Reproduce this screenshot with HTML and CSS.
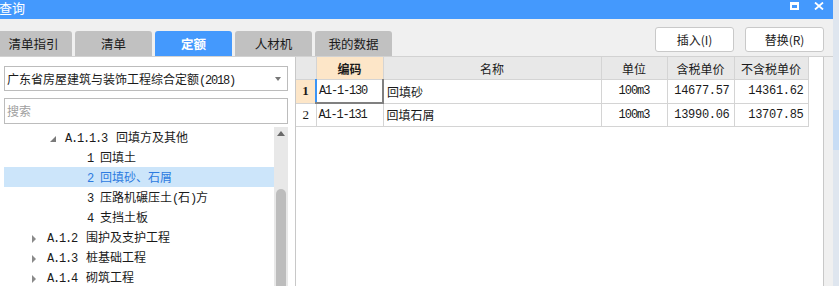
FILE: index.html
```html
<!DOCTYPE html>
<html lang="zh-CN">
<head>
  <meta charset="UTF-8">
  <title>查询</title>
  <link rel="stylesheet" href="styles.css">
</head>
<body>
  <div class="window">
    <!-- Title bar -->
    <div class="titlebar">
      <span class="title">查询</span>
      <div class="title-icons">
        <span class="icon-restore"></span>
        <svg class="icon-close" width="10" height="8" viewBox="0 0 10 8">
          <path d="M1 0.5 L9 7.5 M9 0.5 L1 7.5" stroke="#fff" stroke-width="1.8"/>
        </svg>
      </div>
    </div>

    <!-- Tabs and buttons -->
    <div class="toolbar">
      <div class="tabs">
        <div class="tab">清单指引</div>
        <div class="tab">清单</div>
        <div class="tab active">定额</div>
        <div class="tab">人材机</div>
        <div class="tab">我的数据</div>
      </div>
      <div class="actions">
        <button class="btn">插入(I)</button>
        <button class="btn">替换(R)</button>
      </div>
    </div>

    <div class="main">
      <!-- Left panel -->
      <div class="left">
        <div class="select">
          <span>广东省房屋建筑与装饰工程综合定额<span class="mono">(2018)</span></span>
          <span class="select-arrow"></span>
        </div>
        <div class="search">搜索</div>
        <div class="tree-wrap">
          <div class="tree">
            <div class="node lvl3"><span class="tri-open"></span><span class="code">A.1.1.3</span>回填方及其他</div>
            <div class="node leaf"><span class="num">1</span>回填土</div>
            <div class="node leaf selected"><span class="num">2</span>回填砂、石屑</div>
            <div class="node leaf"><span class="num">3</span>压路机碾压土<span class="mono">(</span>石<span class="mono">)</span>方</div>
            <div class="node leaf"><span class="num">4</span>支挡土板</div>
            <div class="node lvl2"><span class="tri-closed"></span><span class="code">A.1.2</span>围护及支护工程</div>
            <div class="node lvl2"><span class="tri-closed"></span><span class="code">A.1.3</span>桩基础工程</div>
            <div class="node lvl2"><span class="tri-closed"></span><span class="code">A.1.4</span>砌筑工程</div>
          </div>
          <div class="scrollbar">
            <span class="scroll-up"></span>
            <span class="scroll-thumb"></span>
          </div>
        </div>
      </div>

      <!-- Right panel -->
      <div class="right">
        <table class="grid">
          <colgroup>
            <col style="width:20px"><col style="width:67px"><col style="width:218px">
            <col style="width:66px"><col style="width:67px"><col style="width:74px">
          </colgroup>
          <thead>
            <tr>
              <th></th>
              <th class="hl">编码</th>
              <th>名称</th>
              <th>单位</th>
              <th>含税单价</th>
              <th>不含税单价</th>
            </tr>
          </thead>
          <tbody>
            <tr>
              <td class="rownum hl">1</td>
              <td class="code-cell current">A1-1-130</td>
              <td>回填砂</td>
              <td class="unit">100m3</td>
              <td class="price">14677.57</td>
              <td class="price">14361.62</td>
            </tr>
            <tr>
              <td class="rownum">2</td>
              <td class="code-cell">A1-1-131</td>
              <td>回填石屑</td>
              <td class="unit">100m3</td>
              <td class="price">13990.06</td>
              <td class="price">13707.85</td>
            </tr>
          </tbody>
        </table>
      </div>
    </div>
  </div>

  <div class="desk">
    <div class="desk-sel"></div>
  </div>
</body>
</html>
```

FILE: styles.css
```css
/* General */
body {
  margin: 0;
  height: 286px;
  overflow: hidden;
  display: flex;
  background-color: #dfe6ef;
  font-family: "Noto Sans CJK SC", "Noto Sans", sans-serif;
  font-size: 12px;
  color: #1a1a1a;
}

.window {
  width: 833px;
  height: 286px;
  display: flex;
  flex-direction: column;
  background-color: #f0f0f0;
}

.desk {
  flex: 1;
}

.desk-sel {
  margin-top: 110px;
  height: 40px;
  background-color: #c8ddf5;
}

.mono, .code, .num {
  font-family: "Liberation Mono", monospace;
  letter-spacing: -1.2px;
}

/* Title bar */
.titlebar {
  height: 19px;
  flex-shrink: 0;
  background-color: #4499fd;
  color: white;
  display: flex;
  align-items: center;
  overflow: hidden;
}

.title {
  font-size: 13px;
  line-height: 13px;
  margin-top: -5px;
  margin-left: -1px;
}

.title-icons {
  margin-left: auto;
  display: flex;
  align-items: center;
  gap: 15px;
  margin-right: 9px;
  margin-top: -8px;
}

.icon-restore {
  width: 5px;
  height: 3px;
  border: 2px solid white;
  border-top-width: 3px;
}

/* Tabs + buttons */
.toolbar {
  height: 37px;
  flex-shrink: 0;
  display: flex;
  justify-content: space-between;
  border-bottom: 1px solid #d2d2d2;
}

.tabs {
  display: flex;
  gap: 3px;
  margin-left: -5px;
  align-self: flex-end;
}

.tab {
  width: 77px;
  height: 25px;
  line-height: 25px;
  text-align: center;
  background-color: #c1c1c1;
  border-radius: 3px 3px 0 0;
  font-size: 12.5px;
}

.tab.active {
  background-color: #4499fd;
  color: white;
  font-weight: bold;
}

.actions {
  display: flex;
  gap: 11px;
  padding-top: 8px;
  margin-right: 9px;
}

.btn {
  width: 79px;
  height: 25px;
  background-color: white;
  border: 1px solid #c9c9c9;
  border-radius: 3px;
  font-family: inherit;
  font-size: 12px;
  color: #1a1a1a;
  padding: 0;
}

/* Main */
.main {
  flex: 1;
  display: flex;
  min-height: 0;
}

.left {
  width: 296px;
  background-color: white;
  border-right: 1px solid #c8c8c8;
  padding: 9px 7px 0 4px;
  box-sizing: border-box;
  display: flex;
  flex-direction: column;
}

.select {
  height: 25px;
  border: 1px solid #bcbcbc;
  box-sizing: border-box;
  display: flex;
  align-items: center;
  padding: 0 6px 0 2px;
  justify-content: space-between;
}

.select-arrow {
  width: 0;
  height: 0;
  border-left: 3.5px solid transparent;
  border-right: 3.5px solid transparent;
  border-top: 4px solid #777;
}

.search {
  height: 26px;
  margin-top: 7px;
  border: 1px solid #bcbcbc;
  box-sizing: border-box;
  padding-left: 2px;
  line-height: 24px;
  color: #a0a0a0;
}

.tree-wrap {
  flex: 1;
  display: flex;
  margin-top: 3px;
  min-height: 0;
}

.tree {
  flex: 1;
}

.node {
  height: 20px;
  line-height: 20px;
  white-space: nowrap;
}

.node.lvl3 {
  padding-left: 46px;
}

.node.lvl2 {
  padding-left: 28px;
}

.node.leaf {
  padding-left: 83px;
}

.node.selected {
  background-color: #cce5fa;
  color: #2d7be0;
}

.code {
  margin-right: 9px;
}

.num {
  margin-right: 7px;
}

.tri-open {
  display: inline-block;
  vertical-align: middle;
  width: 0;
  height: 0;
  border-left: 6px solid transparent;
  border-bottom: 6px solid #7a7a7a;
  margin-right: 9px;
}

.tri-closed {
  display: inline-block;
  vertical-align: middle;
  width: 0;
  height: 0;
  border-left: 4px solid #8a8a8a;
  border-top: 4px solid transparent;
  border-bottom: 4px solid transparent;
  margin-right: 11px;
}

.scrollbar {
  width: 14px;
  background-color: #e8e8e8;
  display: flex;
  flex-direction: column;
  align-items: center;
}

.scroll-up {
  width: 0;
  height: 0;
  margin-top: 4px;
  border-left: 4px solid transparent;
  border-right: 4px solid transparent;
  border-bottom: 5px solid #6a6a6a;
}

.scroll-thumb {
  width: 10px;
  flex: 1;
  margin-top: 53px;
  background-color: #bdbdbd;
  border-radius: 5px 5px 0 0;
}

/* Grid */
.right {
  width: 527px;
  background-color: white;
  border-right: 1px solid #c8c8c8;
}

.grid {
  border-collapse: collapse;
  table-layout: fixed;
  width: 512px;
}

.grid th, .grid td {
  height: 22px;
  padding: 0;
  border: 1px solid #d4d4d4;
  font-size: 12px;
  white-space: nowrap;
}

.grid th {
  background-color: #e8e8e8;
  font-weight: normal;
  text-align: center;
  border-top: none;
}

.grid th:first-child, .grid td:first-child {
  border-left: none;
}

.grid th.hl {
  background-color: #fde6c8;
  font-weight: bold;
}

.grid td {
  padding-left: 3px;
}

.grid td.rownum {
  text-align: center;
  padding: 0;
  font-family: "Liberation Serif", serif;
  font-size: 13px;
}

.grid td.rownum.hl {
  background-color: #fde6c8;
  font-weight: bold;
}

.grid td.code-cell {
  font-family: "Liberation Mono", monospace;
  letter-spacing: -1.2px;
  padding-left: 2px;
}

.grid td.current {
  border-left: 2px solid #3b94f5;
  border-right: 2px solid #808080;
  border-bottom: 2px solid #808080;
}

.grid td.unit {
  text-align: center;
  padding: 0;
  font-family: "Liberation Mono", monospace;
  letter-spacing: -1px;
}

.grid td.price {
  text-align: right;
  padding: 0 4px 0 0;
  font-family: "Liberation Mono", monospace;
  letter-spacing: -0.3px;
}
```
